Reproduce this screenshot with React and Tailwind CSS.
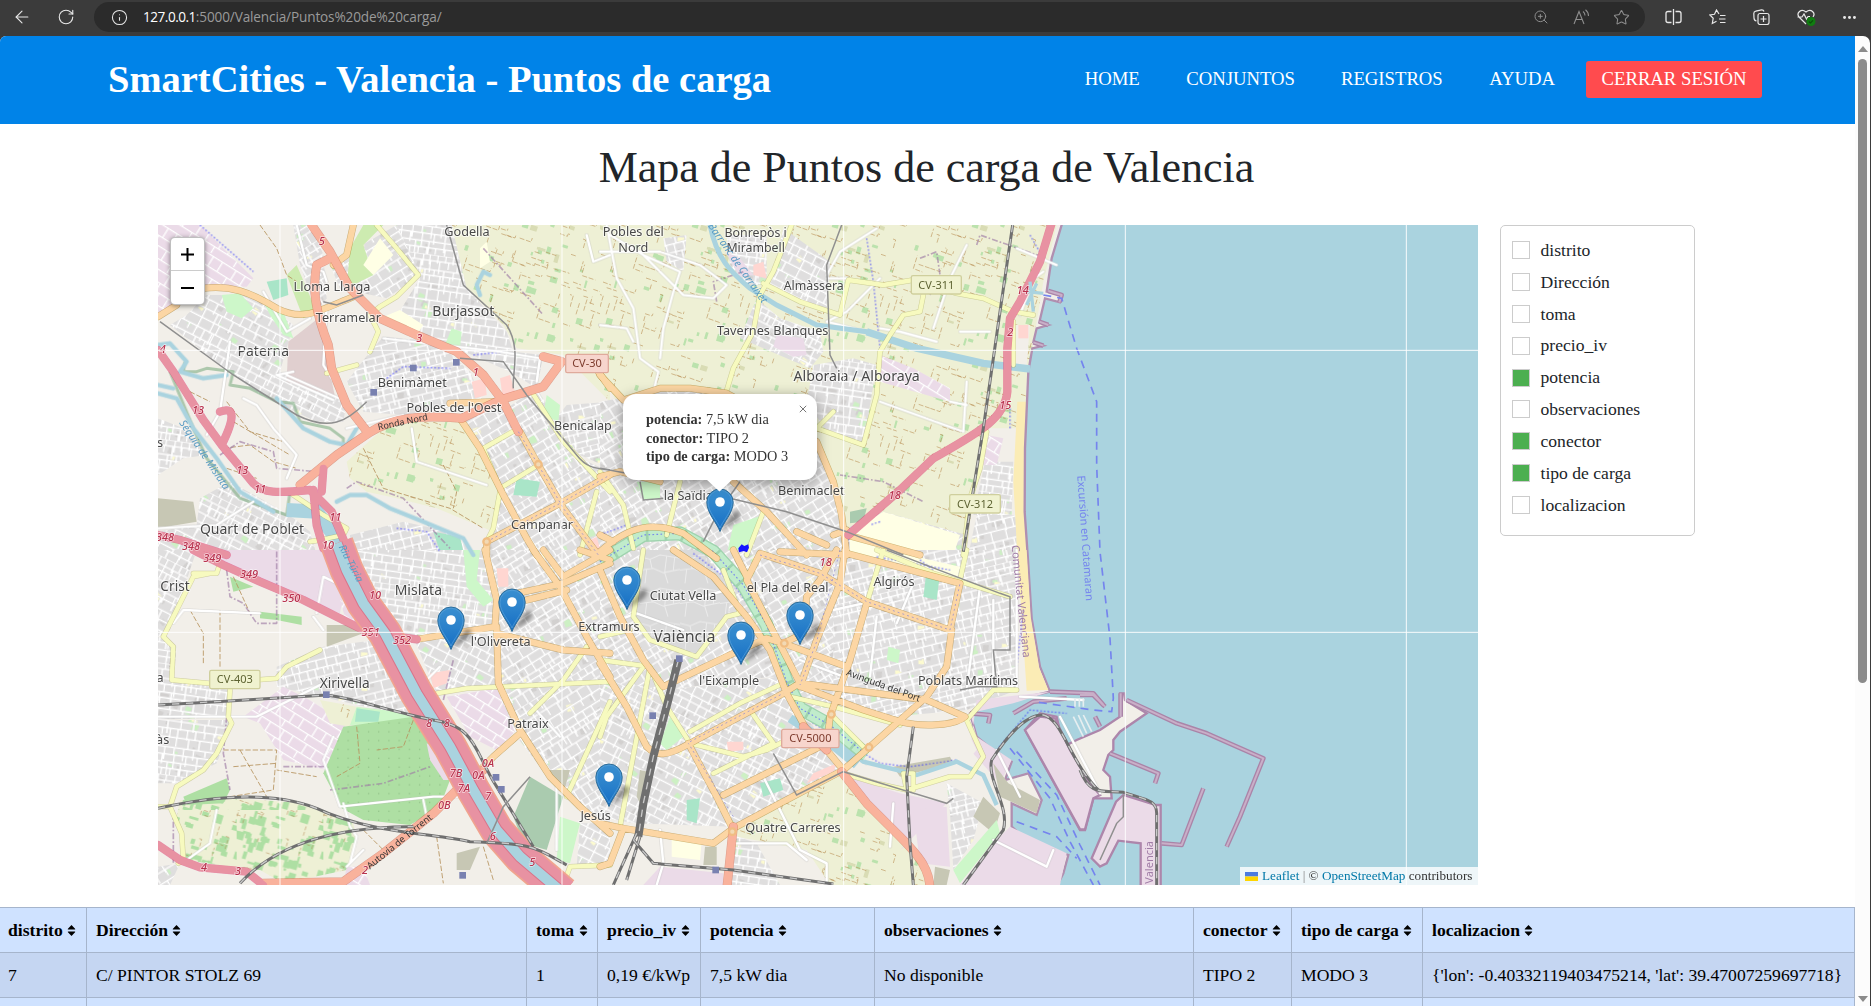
import React from 'react';
import { ArrowLeft, RotateCw, Info, ZoomIn, Star, Ellipsis } from 'lucide-react';

const ORIGIN = { A: [0, 0], B: [1350, 0], C: [0, 1005], D: [1350, 1005], E: [2790, 1005] };

const FILL = {
  farm: 'url(#farm)', city0: 'url(#city0)', city1: 'url(#city1)', city2: 'url(#city2)', city3: 'url(#city3)',
  orchard: 'url(#orchard)', forest: 'url(#forest)', land: '#f2efe9', ind: '#ebdbe8', indg: 'url(#indg)', water: '#aad3df', park: '#cdf7c9',
  green: '#aedfa3', dark: '#aacbaf', red: '#ffd6d1', hatch: '#e0cfcf', beach: '#fbecb5', olive: '#c7c7b4', pale: '#ffffe5', pitch: '#a9e5c8', grass: '#cdebb0', old: 'url(#old)',
};

const AREAS = [
  ['A', 'farm', 'M905 30H1380V560L1240 420L1100 400L1060 330L1000 270L940 210Z'],
  ['A', 'farm', 'M590 740L700 640L790 620L930 620L1000 710L1050 830L1030 950L860 880L740 850L650 830L600 790Z'],
  ['A', 'indg', 'M24 30H150L310 190L290 215L160 215L24 300Z'],
  ['A', 'city1', 'M110 300L170 240L330 240L430 330L390 470L590 560L580 620L500 620L330 540L210 450L60 330Z'],
  ['A', 'hatch', 'M415 380L505 310L555 545L410 500Z'],
  ['A', 'city2', 'M740 30H905L950 220L1070 350L1090 410L1180 420L1160 520L1080 470L920 400L730 320L810 190Z'],
  ['A', 'city0', 'M590 500L660 410L700 365L860 380L960 470L1000 560L760 600L640 590Z'],
  ['A', 'city3', 'M430 30H490L520 120L530 250L500 290L450 150Z'],
  ['A', 'city3', 'M540 150L620 100L740 30L810 180L710 250L570 220Z'],
  ['A', 'grass', 'M600 100L640 30H700L640 90L670 180L590 220Z'],
  ['A', 'grass', 'M410 180L440 150L500 290L460 310Z'],
  ['A', 'pitch', 'M350 200L410 190L415 240L370 255Z'],
  ['A', 'park', 'M215 240L270 235L310 280L275 310L230 290Z'],
  ['A', 'park', 'M330 240L400 290L430 370L400 360L360 300Z'],
  ['A', 'pale', 'M640 150L690 70L730 120L670 180Z'],
  ['A', 'pale', 'M690 310L750 285L820 330L800 360Z'],
  ['A', 'pale', 'M990 100L1010 80L1020 140L990 160Z'],
  ['A', 'city2', 'M24 610L100 640L170 720L100 730L24 780Z'],
  ['A', 'city1', 'M150 850L240 800L420 900L480 950L500 1020H24V950L140 930Z'],
  ['A', 'olive', 'M24 850L130 860L140 920L24 940Z'],
  ['A', 'city3', 'M940 600L1070 580L1160 520L1290 730L1380 770V1020H1010L1050 820L980 690Z'],
  ['A', 'city0', 'M1210 620L1250 570L1380 560V760L1290 720Z'],
  ['A', 'park', 'M1190 540L1230 570L1225 620L1180 600Z'],
  ['A', 'park', 'M905 340L935 350L930 400L885 390Z'],
  ['A', 'red', 'M1050 490L1080 480L1095 530L1060 560Z'],
  ['A', 'red', 'M965 500L1005 490L1010 540L975 550Z'],
  ['A', 'pitch', 'M1100 790L1170 800L1160 845L1090 840Z'],
  ['A', 'city0', 'M600 960L760 920L900 950L980 1020H600Z'],
  ['A', 'pitch', 'M850 950L930 965L940 1010L870 1010Z'],
  ['A', 'red', 'M1310 980L1340 965L1350 1000L1320 1015Z'],

  ['B', 'farm', 'M0 30H1370L1330 200L1280 500L1260 1020H900L750 960L650 680L370 530L180 520L50 560L0 470Z'],
  ['B', 'farm', 'M0 470V30H20V480Z'],
  ['B', 'city0', 'M190 70L260 60L250 170L200 140Z'],
  ['B', 'city2', 'M380 60L500 60L500 210L440 210L390 150Z'],
  ['B', 'city1', 'M550 40L690 140L680 290L510 210Z'],
  ['B', 'city1', 'M470 250L540 310L660 350L670 410L630 460L420 370Z'],
  ['B', 'ind', 'M530 360L610 370L620 420L580 425L520 395Z'],
  ['B', 'ind', 'M375 110L420 130L460 180L420 185Z'],
  ['B', 'red', 'M460 150L490 140L500 190L460 180Z'],
  ['B', 'city2', 'M640 450L760 430L830 450L790 690L680 650L620 560Z'],
  ['B', 'indg', 'M840 420L940 460L1050 520L1050 560L840 500Z'],
  ['B', 'city3', 'M0 560L60 550L200 520L370 530L650 660L740 940L850 890L1100 960V1020H0Z'],
  ['B', 'dark', 'M750 890L800 880L790 920L750 925Z'],
  ['B', 'pale', 'M750 950L850 890L1080 960L1060 1020H750Z'],
  ['B', 'land', 'M1165 640L1250 640L1252 900L1240 1020H1090Z'],
  ['B', 'city2', 'M1155 740L1240 740L1235 900H1120Z'],
  ['B', 'city0', 'M1130 900L1250 900V1020H1105Z'],
  ['B', 'indg', 'M1160 660L1210 670L1190 750L1150 750Z'],
  ['B', 'park', 'M110 800H180V850L130 855Z'],
  ['B', 'park', 'M400 930L490 900L440 1020H380Z'],
  ['B', 'beach', 'M1252 560L1278 560L1277 750L1285 1020H1252L1240 800Z'],
  ['B', 'land', 'M1245 330H1290L1280 450H1240Z'],
  ['B', 'red', 'M1255 330L1285 330V370H1255Z'],
  ['B', 'water', 'M1385 30L1355 130L1340 230L1385 240L1380 262L1335 250L1318 322L1345 330L1310 340L1300 382L1330 392L1297 400L1285 470L1275 700L1274 890L1283 1020L1295 1210L1320 1355L1350 1430L1240 1455L1150 1460L1110 1495L1130 1565L1185 1610L1235 1640L1215 1695L1285 1675L1325 1755L1310 1800L1235 1765L1235 1835L1290 1885L1405 1920L1390 1975L1370 2015H2640V24H1385Z'],

  ['C', 'city1', 'M24 0H140L60 240L24 260Z'],
  ['C', 'ind', 'M130 0L560 0L590 80L570 190L330 100Z'],
  ['C', 'indg', 'M570 150L660 220L590 220Z'],
  ['C', 'city0', 'M380 350L520 290L680 270L780 430L780 500L600 460L380 410Z'],
  ['C', 'olive', 'M530 225L600 225L640 250L530 290Z'],
  ['C', 'indg', 'M280 500L400 410L480 450L590 520L530 660L400 630L330 520Z'],
  ['C', 'city2', 'M24 260L80 290L70 390L180 410L240 420L240 500L24 510Z'],
  ['C', 'city2', 'M24 510H250L200 640L80 700L24 700Z'],
  ['C', 'farm', 'M510 450L620 470L600 530L540 520Z'],
  ['C', 'park', 'M620 470L780 490V520L600 525Z'],
  ['C', 'pitch', 'M620 475L690 485L685 515L615 515Z'],
  ['C', 'forest', 'M580 530L790 500L850 590L900 690L870 770L780 825L640 810L575 775L520 670Z'],
  ['C', 'orchard', 'M90 750L240 745L330 750L460 760L610 820L620 870L590 960L400 1000L330 960L300 960L110 930L80 800Z'],
  ['C', 'green', 'M100 740L230 685L240 720L220 760L110 765Z'],
  ['C', 'green', 'M240 80L310 110L250 125Z'],
  ['C', 'green', 'M330 185L455 200V225L380 210L330 205Z'],
  ['C', 'ind', 'M830 580L870 600L930 690L880 690L840 630Z'],
  ['C', 'city2', 'M610 0H1010L1040 240L790 260L740 240L650 90Z'],
  ['C', 'park', 'M940 0L990 0L980 90L1030 150L1000 170L950 110Z'],
  ['C', 'city1', 'M790 260L1030 250L1040 410L860 430Z'],
  ['C', 'red', 'M840 370L900 360L890 400L850 415Z'],
  ['C', 'indg', 'M890 440L1040 415L1100 540L1040 600L960 560Z'],
  ['C', 'city3', 'M1020 0H1380V840L1240 740L1100 560L1040 410Z'],
  ['C', 'red', 'M1040 55H1075V110H1045Z'],
  ['C', 'dark', 'M1140 680L1240 740L1190 900L1120 880L1090 800Z'],
  ['C', 'olive', 'M1190 660H1260L1240 730Z'],
  ['C', 'park', 'M1230 800L1290 820L1260 940L1220 930Z'],
  ['C', 'city1', 'M1290 820H1380V950H1280Z'],
  ['C', 'olive', 'M920 910L990 890L960 960L920 960Z'],
  ['C', 'city3', 'M24 950L90 940L60 1005H24Z'],
  ['C', 'indg', 'M590 950L640 950L660 1005H580Z'],

  ['D', 'city3', 'M0 0H730L740 200L720 470L580 480L520 380L200 420L0 400Z'],
  ['D', 'old', 'M120 0H300L390 110L385 200L290 310L150 270L100 190Z'],
  ['D', 'city0', 'M700 0H1250V420L1100 480L870 500L700 470Z'],
  ['D', 'city1', 'M0 390L200 420L540 380L620 500L730 660L400 830L100 820L0 800Z'],
  ['D', 'pale', 'M740 0H860L1080 50L1070 90L830 20L740 20Z'],
  ['D', 'pitch', 'M980 60L1020 70L1010 150L970 140Z'],
  ['D', 'park', 'M865 290L900 300L895 340L860 330Z'],
  ['D', 'red', 'M640 670L710 640L700 665L620 700Z'],
  ['D', 'red', 'M380 575H430V600L385 605Z'],
  ['D', 'park', 'M210 500L250 560L200 600L180 580Z'],
  ['D', 'pitch', 'M480 700L540 685L550 720L490 740Z'],
  ['D', 'pitch', 'M260 750L300 745L290 820L260 810Z'],
  ['D', 'beach', 'M1252 0H1280L1292 200L1318 355L1345 420L1280 422L1265 200Z'],
  ['D', 'ind', 'M1130 450L1350 425L1240 460L1110 490L1130 560L1235 630L1200 700L1110 600Z'],
  ['D', 'farm', 'M730 665L590 735L400 840L410 860L620 900L690 1005H990L930 880L800 740Z'],
  ['D', 'city2', 'M385 850L470 880L540 1005H385Z'],
  ['D', 'ind', 'M740 680L900 730L1040 760L1000 800L900 900L930 880Z'],
  ['D', 'land', 'M740 640L840 560L1090 520L1130 600L1060 680L900 700Z'],
  ['D', 'olive', 'M880 650L1050 620L1060 640L900 680Z'],
  ['D', 'city0', 'M1040 700L1150 760L1120 870L1060 960L1050 790Z'],
  ['D', 'olive', 'M1150 740L1200 790L1180 850L1120 800Z'],
  ['D', 'park', 'M1060 960L1190 810L1200 850L1080 1000Z'],
  ['D', 'olive', 'M1180 640L1225 700L1320 750L1310 790L1200 740Z'],
  ['D', 'ind', 'M1190 870L1230 830L1400 910L1380 1005H1080Z'],
  ['D', 'ind', 'M940 780L1040 770L1050 950L960 940Z'],
  ['D', 'pale', 'M215 860L305 875L300 930L215 920Z'],
  ['D', 'olive', 'M315 890H350V945H310Z'],
  ['D', 'ind', 'M180 950L370 970V1005H130Z'],
  ['D', 'olive', 'M120 660L145 665L120 760L110 740Z'],
  ['D', 'olive', 'M1005 950L1050 960L1040 1005H1000Z'],
];

const COAST = [
  ['D', 'land', 'M1275 540L1320 490L1370 500L1390 590L1430 570L1500 540L1560 500V430H1572L1575 450L1640 490L1560 545L1540 570L1540 600L1525 615L1510 660L1530 680L1535 745L1480 745L1455 840L1440 840Z'],
  ['D', 'ind', 'M1275 540L1320 500L1365 505L1410 600L1470 700L1500 735L1480 745L1455 838L1440 838Z'],
  ['E', 'ind', 'M130 735L228 765H242V1020H182V880L115 872L80 940L60 950L35 925L108 755Z'],
];

const KIND = {
  motor: ['#dc2a67', '#e892a2', 22], trunk: ['#c84e2f', '#f9b29c', 24], prim: ['#a06b00', '#fcd6a4', 18], sec: ['#a9a95a', '#f7fabf', 13],
  min: ['#bdbdbd', '#ffffff', 7], river: ['#aad3df', '#aad3df', 11],
};

const ROADS = [
  ['A', 'river', 'M24 390L60 385L110 440L90 470L160 490L230 480M24 535L80 550L130 640L200 730L270 830L370 890M24 510L70 520M380 550L460 640L540 680L590 690L620 640M560 860L600 840L650 840L720 880L820 920L940 970L970 1020M990 240L980 210L1000 170L1020 180'],
  ['A', 'min', 'M240 380L210 590L170 660M280 550L320 570L370 640L440 720L410 790M410 480L590 560M530 270L520 450L590 560M24 940L200 930L310 860M785 640L800 740L1010 810M340 230L410 350L480 310M700 370L1050 410L1170 430L1160 500M590 640L760 600M380 480L550 555M430 470L380 480M440 30L470 150L520 170L530 200M1380 120L1330 140L1310 60'],
  ['B', 'min', 'M20 30L50 190L100 280L120 430L175 470L160 530M30 60L130 120L240 170L220 230L190 340L180 430M0 110H180L300 150L380 210M830 40L720 110L680 180M680 190H740M840 190L740 290L680 320L800 350M1100 90L1050 190L1000 340M1080 350H1170M840 340L900 350L1010 380M840 560L1090 650L1100 500M1050 560L1100 570M130 120L250 240L340 250L380 210M0 330L80 340L100 380M1250 100L1370 150M1260 300L1300 190L1330 170'],
  ['C', 'min', 'M70 220L100 180L330 190M500 190L520 80L600 120M490 200L520 240M24 500H320L520 400M550 560L520 630L570 770L850 740L930 740M580 760L600 830L620 860L600 940M200 780L180 880L110 930M820 750L830 800M870 350L800 420M1230 560L1140 460M1220 700V900M640 900L590 950'],
  ['D', 'min', 'M0 230L110 190L250 240M700 180L790 160M490 680L600 900L680 940V1005M400 880H560L620 930M1180 870L1340 950L1360 900M880 760L870 890M740 580L800 640M890 220L940 100M810 380L830 200M180 840L190 940L170 1005M1250 0V420M1180 150V400M1140 110L1100 420M600 330L730 380M270 150L380 120L430 200L500 170M1260 440L1450 450M1380 500L1500 730M1190 600L1260 740'],
  ['A', 'sec', 'M680 30L740 100L805 180L740 245L690 275L660 300L685 350L660 410M530 475L620 450M430 840L520 900L590 940L580 960L510 975L480 980M1105 640L1000 700L1050 820L1165 750M1145 530L1240 680L1380 830M1050 830L1030 940L1010 980M1340 830L1290 1020'],
  ['B', 'sec', 'M575 30L520 170L480 240L460 350L400 460L370 560M490 205L600 260L720 300L745 195L850 210L940 195L1070 235L1150 250L1240 290L1300 300M970 240L960 290L910 300L870 360L840 410L830 540L790 690L650 640L700 590M0 770L70 870L100 1000M240 800L200 960M490 890L440 1020M1160 650L1140 760L1110 850L1090 1020M1240 320L1240 450'],
  ['C', 'sec', 'M130 70H200L210 40M180 70L130 80L40 260L70 290L65 390L180 400L380 385L410 350L510 300M240 420L235 500L245 520L200 610L160 660L80 710L60 770L95 850L100 930L85 940M24 770H60M860 430L950 415L1380 395M1140 490L1240 390L1310 290M1380 455L1250 740'],
  ['C', 'sec', 'M1240 1005L1260 950L1380 945'],
  ['D', 'sec', 'M130 0L100 200L150 270L290 320L380 200L420 190L370 60M0 260L90 240M0 330L150 350L200 470L270 580L430 620L500 600L600 550M150 350L60 830M0 560L20 500L130 350M270 545L420 460L550 400M450 480L520 580L340 670M570 440L700 470L900 525M700 500L800 600M850 0L800 160M1100 0L1080 90M730 670L830 700L920 720L1050 680H1110L1150 620L1100 510L1180 420H1250M830 0L1000 70L1230 140M920 720L910 670L940 670V720'],
  ['A', 'prim', 'M24 305L80 270M160 220C240 210 300 230 380 280C460 320 500 290 610 245M610 30L590 120L550 150M1110 650L1165 750L1240 880L1345 1020M930 610L990 700L1060 840L1130 970L1160 1020M900 565L1030 560M1010 980L1240 860L1380 780M1010 980V1020M1345 470L1380 520'],
  ['B', 'prim', 'M0 480L70 555L180 520L270 520L380 535L650 680L700 800L725 900L740 1020M0 1010C90 930 160 920 250 955L350 1030M0 960L40 980M0 785L60 770L180 800M400 800L500 890L620 1020M740 960L960 1020M700 960L740 945M540 1010L740 1020M590 950L680 990'],
  ['C', 'prim', 'M1005 0L1040 150L1035 230L800 268M1040 230L1045 400L1110 540L1200 680L1290 770L1380 850M1040 250L1240 300L1380 310M1150 0L1230 110L1310 260L1380 380M1100 130L1240 100L1380 40M1130 150L1250 120M1240 80L1380 0M1110 550L1030 620L970 680M1380 30L1290 0M1180 0L1240 80'],
  ['D', 'prim', 'M0 60L60 200L130 330L190 410L400 310L500 265L550 280L610 250L620 140L660 90L710 0M0 340L80 470L140 590C170 620 200 620 270 580L550 430L590 405L790 480L900 515C960 530 1060 530 1095 500L980 450L600 400L440 90L480 10L660 70L800 155L1050 240L1080 100L740 10M220 0L340 80L440 200L510 300L560 430L620 540L680 600L730 660M735 0L720 100L650 270L600 410M800 160L750 330L690 500L680 590M730 660L810 590L980 440L1040 350L1055 240M550 280L740 350M730 660L540 760L400 835L340 880L70 835L0 820M265 580L350 740L400 840M370 735L600 620L660 590M70 835L30 940L0 950M400 0L440 80'],
  ['A', 'trunk', 'M500 150C485 230 500 300 535 390L545 460L590 570L655 655M655 655C730 605 820 600 935 610L1050 555L1180 515L1235 440L1180 425M655 655L560 720L450 810M485 30L540 110L600 220L690 310L800 360L920 410L1000 480L1060 560L1105 650M500 150L540 130'],
  ['C', 'trunk', 'M1000 660L940 700L850 790L700 910L580 995L340 1000'],
  ['D', 'trunk', 'M400 830L380 1020M725 665L800 760L900 860C960 920 990 960 990 1020M610 530L680 600'],
  ['A', 'motor', 'M24 405L70 470L160 615L215 690L310 805C340 835 380 835 480 825L545 890L600 1020M490 825L500 930L520 1000M515 830L520 760M215 690C260 600 250 575 210 590M24 960L90 975L230 1020'],
  ['B', 'motor', 'M1355 24L1320 140L1260 260L1230 310L1222 400V530C1215 610 1140 650 1000 730L900 825L745 960'],
  ['C', 'motor', 'M130 0L220 45L330 95L460 150L560 200L660 250L800 268M24 885L90 930L150 952L290 965L340 1005'],
];

const RAILS = [
  ['A', 'thin', 'M30 320L250 480L440 600C540 650 590 620 650 560M890 30L940 210L1070 330C1115 400 1085 480 1090 520M930 430L1060 440L1130 540L1280 720C1310 760 1340 760 1380 765M520 260L560 270L640 240'],
  ['B', 'thin', 'M725 30L680 150L690 420L710 460M390 850L560 890L740 950L910 1020M0 760L80 775M120 800L130 855L190 850M420 800L350 900L310 980'],
  ['B', 'rail', 'M1238 30L1200 290L1150 640L1090 1010'],
  ['C', 'rail', 'M24 465L200 455L530 435C640 450 700 480 850 510C980 530 970 600 1040 710L1150 890M24 775C180 740 360 720 500 775C660 850 850 850 960 875C1150 880 1150 890 1250 945M270 1000C380 880 560 830 790 830'],
  ['C', 'thin', 'M1140 680L1060 770L1010 880'],
  ['D', 'wide', 'M235 330L205 450L160 620L130 760L115 860'],
  ['D', 'rail', 'M110 850L60 960L40 1005M120 860L80 990M100 870L160 940L400 960L700 1002M940 530L920 680L930 880L940 1005M1090 1005L1210 840C1230 770 1160 690 1175 630C1220 560 1280 490 1330 495C1390 510 1410 640 1500 725'],
  ['D', 'thin', 'M520 610L590 735L730 665L1040 760L1060 745M860 0L1200 130L1230 140V300H1180L1190 410H1130L1080 420'],
  ['E', 'rail', 'M0 660C30 740 70 720 130 727C200 750 230 750 230 790V1010'],
  ['E', 'thin', 'M130 735V800L110 820L60 930'],
];

const BREAKWATERS = [
  ['B', 'M1345 228L1385 240L1378 262M1318 320L1345 330M1300 382L1330 392'],
  ['D', 'M1350 425L1480 430L1510 465M1240 490L1300 455L1400 445M1110 490L1170 495L1165 520'],
  ['E', 'M122 430V500M140 450L290 520L380 550L550 625L480 800L440 890M90 610L235 670L225 700M370 715L305 885L245 880M0 435H40L75 470M45 500L60 530'],
];

const LABELS = [
  [951, 64, 38, 'Godella'], [546, 228, 38, 'Lloma Llarga'], [595, 321, 38, 'Terramelar'], [940, 302, 42, 'Burjassot'], [340, 423, 42, 'Paterna'],
  [787, 515, 38, 'Benimàmet'], [912, 592, 38, "Pobles de l'Oest"], [1299, 645, 38, 'Benicalap'], [1176, 943, 38, 'Campanar'], [306, 956, 42, 'Quart de Poblet'],
  [1450, 62, 38, 'Pobles del'], [1450, 111, 38, 'Nord'], [1817, 66, 37, 'Bonrepòs i'], [1817, 111, 37, 'Mirambell'], [1991, 226, 37, 'Almàssera'],
  [1868, 361, 38, 'Tavernes Blanques'], [2120, 498, 42.500, 'Alboraia / Alboraya'], [1984, 841, 38, 'Benimaclet'], [1615, 856, 38, 'la Saïdia'],
  [75, 1129, 41, 'Crist'], [30, 1401, 38, 'a'], [38, 1587, 38, 'às'], [30, 696, 38, 's'], [805, 1140, 42, 'Mislata'], [1052, 1294, 38, "l'Olivereta"], [584, 1418, 41, 'Xirivella'],
  [1134, 1539, 38, 'Patraix'], [1337, 1815, 38, 'Jesús'], [1377, 1247, 38, 'Extramurs'], [1599, 1154, 38, 'Ciutat Vella'], [1603, 1280, 48, 'València'],
  [1913, 1130, 38, 'el Pla del Real'], [2232, 1113, 38, 'Algirós'], [1737, 1409, 38, "l'Eixample"], [2454, 1409, 38, 'Poblats Marítims'], [1929, 1850, 38, 'Quatre Carreres'],
];
const NUMBERS = [
  [515, 90, '5'], [808, 380, '3'], [977, 482, '1'], [38, 415, '4'], [144, 596, '13'], [277, 777, '13'], [330, 834, '11'], [556, 918, '11'], [534, 1002, '10'], [45, 978, '348'], [123, 1005, '348'],
  [187, 1041, '349'], [297, 1090, '349'], [424, 1160, '350'], [662, 1262, '351'], [756, 1287, '352'], [675, 1152, '10'], [837, 1536, '8'], [890, 1536, '8'], [1014, 1657, '0A'], [985, 1691, '0A'], [918, 1687, '7B'], [942, 1731, '7A'],
  [883, 1783, '0B'], [1015, 1754, '7'], [1028, 1875, '6'], [1147, 1952, '5'], [645, 1976, '2'], [162, 1969, '4'], [264, 1980, '3'],
  [2618, 238, '14'], [2581, 362, '2'], [2566, 581, '15'], [2234, 853, '18'], [2027, 1054, '18'],
];
const SHIELDS = [
  [1247, 418, 128, 'CV-30', 'red'], [2284, 182, 150, 'CV-311', 'olive'], [2399, 839, 152, 'CV-312', 'olive'], [179, 1366, 151, 'CV-403', 'olive'], [1895, 1543, 172, 'CV-5000', 'red'],
];
const STATIONS = [[671, 532], [790, 459], [919, 442], [529, 1439], [1038, 1687], [1054, 1723], [938, 1981], [1588, 1331], [1508, 1502], [1697, 1965]];

function makeRandom(seed) {
  let s = seed;
  return () => {
    s = (s * 16807) % 2147483647;
    return s / 2147483647;
  };
}

function dashes(seed, count, size) {
  const r = makeRandom(seed);
  let d = '';
  for (let i = 0; i < count; i++) {
    const x = r() * size;
    const y = r() * size;
    const l = 14 + r() * 26;
    const flip = r() > 0.4;
    const dx = flip ? l : l * 0.3;
    const dy = flip ? l * 0.35 : -l;
    d += `M${x.toFixed(0)} ${y.toFixed(0)}l${dx.toFixed(0)} ${dy.toFixed(0)}`;
    if (r() > 0.55) d += `l${(dy * 0.35).toFixed(0)} ${(-dx * 0.35).toFixed(0)}`;
  }
  return d;
}

function plots(seed, count, size, max) {
  const r = makeRandom(seed);
  let d = '';
  for (let i = 0; i < count; i++) {
    const x = r() * size;
    const y = r() * size;
    const w = 6 + r() * max;
    const h = 6 + r() * max;
    d += `M${x.toFixed(0)} ${y.toFixed(0)}l${w.toFixed(0)} ${(w * 0.3).toFixed(0)}l${(-h * 0.3).toFixed(0)} ${h.toFixed(0)}l${(-w).toFixed(0)} ${(-w * 0.3).toFixed(0)}z`;
  }
  return d;
}

function streets(seed, size) {
  const r = makeRandom(seed);
  let d = '';
  for (let y = 0; y < size - 10; y += 17 + r() * 17) {
    d += `M0 ${y.toFixed(0)}H${size}`;
    const step = 20 + r() * 22;
    for (let x = r() * 20; x < size; x += step + r() * 8) d += `M${x.toFixed(0)} ${y.toFixed(0)}v${(18 + r() * 22).toFixed(0)}`;
  }
  return d;
}

const CITY = [[11, -14], [29, 27], [53, 8], [97, -32]];

function Patterns() {
  return (
    <defs>
      <pattern id="farm" width="420" height="420" patternUnits="userSpaceOnUse">
        <rect width="420" height="420" fill="#eef0d5" />
        <path d={plots(7, 34, 400, 17)} fill="#aedfa3" opacity=".8" />
        <path d={plots(31, 6, 400, 22)} fill="#d9dcb4" />
        <path d={dashes(5, 88, 420)} fill="none" stroke="#b5894c" strokeWidth="2.4" strokeDasharray="15 5" opacity=".7" />
      </pattern>
      <pattern id="orchard" width="260" height="260" patternUnits="userSpaceOnUse">
        <rect width="260" height="260" fill="#eef0d5" />
        <path d={plots(17, 90, 260, 22)} fill="#aedfa3" />
        <path d={dashes(8, 22, 260)} fill="none" stroke="#a8763a" strokeWidth="2" strokeDasharray="12 5" opacity=".7" />
      </pattern>
      <pattern id="forest" width="30.6" height="26.5" patternUnits="userSpaceOnUse">
        <rect width="31" height="27" fill="#aedfa3" />
        <rect x="12" y="14" width="2.5" height="2.5" fill="#6f9f68" />
      </pattern>
      <pattern id="indg" width="80" height="60" patternUnits="userSpaceOnUse" patternTransform="rotate(32)">
        <rect width="80" height="60" fill="#ebdbe8" />
        <path d="M0 5H80M0 38H80M20 5V38M55 38V65M68 5V38" stroke="#fff" strokeWidth="4" fill="none" />
      </pattern>
      <pattern id="old" width="120" height="100" patternUnits="userSpaceOnUse">
        <rect width="120" height="100" fill="#dadada" />
        <path d="M0 20L30 28L60 15L120 24M0 60L40 55L70 68L120 58M30 28L36 55M80 18L74 68L84 100M20 58L15 100M104 22L100 60" stroke="#ececec" strokeWidth="3" fill="none" />
      </pattern>
      {CITY.map(([seed, angle], i) => (
        <pattern key={seed} id={'city' + i} width="330" height="330" patternUnits="userSpaceOnUse" patternTransform={`rotate(${angle})`}>
          <rect width="330" height="330" fill="#dfdede" />
          <path d={plots(seed + 3, 24, 320, 17)} fill="#d2d0cf" />
          <path d={plots(seed + 6, 9, 320, 16)} fill="#cdf0c4" />
          <path d={plots(seed + 9, 6, 320, 14)} fill="#fdfbd0" />
          <path d={streets(seed, 330)} fill="none" stroke="#cfcece" strokeWidth="6.4" />
          <path d={streets(seed, 330)} fill="none" stroke="#fff" strokeWidth="5" />
        </pattern>
      ))}
      <linearGradient id="pin" x1="0" y1="0" x2="0" y2="1">
        <stop offset="0" stopColor="#3a8fd0" />
        <stop offset=".5" stopColor="#2a81cb" />
        <stop offset="1" stopColor="#146dc4" />
      </linearGradient>
    </defs>
  );
}

const at = (k) => `translate(${ORIGIN[k][0]} ${ORIGIN[k][1]})`;

function Shapes({ items, outline }) {
  return items.map(([k, f, d], i) => (
    <path key={i} transform={at(k)} d={d} fill={FILL[f]} stroke={outline ? '#ad86ab' : f === 'water' ? '#b08fb0' : 'none'} strokeWidth={7} />
  ));
}

function Roads({ kinds }) {
  const list = ROADS.filter((r) => kinds.includes(r[1]));
  return (
    <g fill="none" strokeLinejoin="round" strokeLinecap="round">
      {list.map(([k, t, d], i) => (
        <path key={'c' + i} transform={at(k)} d={d} stroke={KIND[t][0]} strokeOpacity=".5" strokeWidth={KIND[t][2] + 3} />
      ))}
      {list.map(([k, t, d], i) => (
        <path key={'f' + i} transform={at(k)} d={d} stroke={KIND[t][1]} strokeWidth={KIND[t][2]} />
      ))}
    </g>
  );
}

function MapDrawing() {
  const turia = 'M560 -20L590 60L640 160L705 250L800 430L900 590L970 720L1040 840L1110 920L1240 1030';
  const garden = 'M1350 1040L1480 960L1590 955L1690 1010L1780 1110L1850 1230L1910 1400L1950 1480L2040 1530L2150 1620';
  return (
    <svg className="block h-full w-full" viewBox="24 30 3960 1980" preserveAspectRatio="none" fontFamily="'Noto Sans', sans-serif">
      <Patterns />
      <rect x="24" y="30" width="3960" height="1980" fill="#f2efe9" />
      <Shapes items={AREAS} />
      <Shapes items={COAST} outline />
      <g fill="none" strokeLinejoin="round">
        {BREAKWATERS.map(([k, d], i) => <path key={i} transform={at(k)} d={d} stroke="#aa84a8" strokeWidth="14" />)}
        {BREAKWATERS.map(([k, d], i) => <path key={i + 'i'} transform={at(k)} d={d} stroke="#c9afc8" strokeWidth="6" />)}
        <g stroke="#b79460" strokeWidth="2.6" strokeDasharray="16 6">
          <path d="M220 700L300 690L370 740L440 760M230 760L320 790M100 520L180 560M250 620L420 720M230 560L300 650L400 680M330 30L380 100L410 180L440 200M640 700L700 820L900 880L1000 940M880 750L920 830L910 880" />
          <path transform="translate(0 1005)" d="M120 180L160 250V340M210 180V350M250 80L300 190M220 600H380L370 720L240 740M250 650L380 640M270 600L350 740M380 660L500 680M640 840L700 900L780 850M860 860L880 1000M1000 890L1030 990M620 530L630 640L560 680M790 510L760 590L680 600" />
        </g>
        <g stroke="#9f7da6" strokeWidth="5" strokeDasharray="18 6 5 6" opacity=".65">
          <path d="M210 720L270 680L370 710L380 760L500 770M590 820L620 800L760 850L900 1000M1000 100L1180 300M1700 260L1690 200L1780 170M2310 130L2360 110L2370 180L2340 240M2480 90L2490 60L2690 130M2070 780L2200 800L2320 860" />
          <path transform="translate(0 1005)" d="M230 60L240 140L280 160L320 220L380 220V0M70 290L60 350M230 500L220 610L240 720M540 720L700 700L840 650M880 450L910 330M70 780V940M400 650L530 650" />
        </g>
        <path d="M105 440L100 470H140L170 460L250 470L240 510L300 520L380 560L430 565L450 620L540 640L580 670V700M60 470L130 640L170 730L270 850L410 900L420 830" stroke="#7fae83" strokeWidth="9" opacity=".6" />
        <g stroke="#3a3aff" strokeWidth="3.5" strokeDasharray="5 6" opacity=".75">
          <path d="M150 30L310 170M710 490L760 455L900 460M970 420L1060 410M2150 70L2170 200L2190 400M2640 60L2680 130M740 940L830 950L870 1010M2100 960L2080 1020M2580 580V640M2190 920L2160 930M1350 960L1430 930" />
          <path transform="translate(1350 1005)" d="M280 10L400 100L490 230L540 400L640 520L760 590L840 640L930 650L1070 630M830 20L1050 60M960 30L1000 60M1270 180L1250 350M1190 600L1290 480L1400 490M180 850L340 875" />
        </g>
      </g>
      <Roads kinds={['river', 'min']} />
      <g fill="none" stroke="#aad3df">
        <path d="M1680 30C1700 130 1740 170 1800 220L1880 270L2000 330L2150 350L2300 400L2500 445L2640 462" strokeWidth="15" />
        <path d="M2150 350L2300 400L2500 445L2640 462" strokeWidth="22" />
        <path d="M410 885L500 890L580 1000" strokeWidth="42" />
        <path d="M2030 1560L2140 1640L2300 1680L2420 1640L2500 1680L2540 1770" strokeWidth="13" />
        <path d="M1920 1510L2060 1600L2120 1650" strokeWidth="26" />
      </g>
      <path d={garden} fill="none" stroke="#9fd3ae" strokeWidth="42" strokeLinejoin="round" />
      <path d={garden} fill="none" stroke="#c0eccb" strokeWidth="34" strokeLinejoin="round" strokeDasharray="48 8" />
      <path d={garden} fill="none" stroke="#4a4aff" strokeWidth="3.5" strokeDasharray="5 7" opacity=".6" />
      <Roads kinds={['sec']} />
      <Roads kinds={['prim']} />
      <Roads kinds={['trunk', 'motor']} />
      <g transform="translate(0 1005)" fill="none" strokeLinejoin="round">
        <path d={turia} stroke="#f0a48f" strokeWidth="102" />
        <path d={turia} stroke="#e892a2" strokeWidth="92" />
        <path d={turia} stroke="#d9748a" strokeWidth="36" />
        <path d={turia} stroke="#aad3df" strokeWidth="30" />
      </g>
      <g fill="none">
        {RAILS.map(([k, t, d], i) => (
          <g key={i} transform={at(k)}>
            <path d={d} stroke={t === 'thin' ? '#8f8f8f' : '#6f6f6f'} strokeWidth={t === 'wide' ? 24 : t === 'rail' ? 9 : 4.5} />
            {t !== 'thin' && <path d={d} stroke="#c9c9c9" strokeWidth="4" strokeDasharray="22 20" />}
          </g>
        ))}
        <g stroke="#8a86d8" strokeWidth="2.6" strokeDasharray="6 9" opacity=".8">
          <path d="M1105 650L1165 750L1240 880L1345 1020M1010 980L1240 860L1380 780M2070 1005L2000 1280L1950 1410M1620 1580L1900 1435M1830 1020L2010 1075L2150 1160L2400 1245L2430 1105M1750 1805L1615 1585" />
        </g>
        <g stroke="#7584ee" strokeWidth="5" strokeDasharray="24 18">
          <path d="M2680 240L2735 250L2780 400L2840 560V750L2850 1010L2880 1270L2890 1450L2885 1490L2830 1485L2650 1460" />
          <path d="M2580 1600L2700 1750L2760 1880L2830 2010M2600 1610L2720 1740L2790 1890L2850 2010M2600 1820L2720 1865L2780 1930" />
        </g>
        <path d="M2775 1450V1475M2788 1450V1475M2800 1450V1475M2770 1505L2800 1565M2785 1500L2810 1555M2800 1500L2825 1550" stroke="#e6eef0" strokeWidth="5" />
        <path d="M2630 230L2680 235M2640 200L2650 290M2660 205L2630 270" stroke="#aad3df" strokeWidth="10" />
      </g>
      <path d="M1765 1000l10 -12l8 5l12 -5l2 10l-6 14l-10 -4l-14 4z" fill="#1313ff" />
      {[[2044, 1498], [2157, 1597], [1010, 980], [1165, 748], [1903, 1285], [1747, 1850]].map(([x, y]) => (
        <circle key={x} cx={x} cy={y} r="10" fill="#f2d9b4" stroke="#f0bd83" strokeWidth="7" />
      ))}
      {STATIONS.map(([x, y]) => <rect key={x} x={x - 10} y={y - 10} width="20" height="20" fill="#7981b0" />)}
      {SHIELDS.map(([x, y, w, t, c]) => (
        <g key={t}>
          <rect x={x} y={y} width={w} height="55" rx="5" fill={c === 'red' ? '#f7d5cd' : '#f0f2d0'} stroke={c === 'red' ? '#dfaa9c' : '#cfcf9d'} strokeWidth="4" />
          <text x={x + w / 2} y={y + 39} fontSize="33" textAnchor="middle" fill={c === 'red' ? '#7d3b2d' : '#5d6332'}>{t}</text>
        </g>
      ))}
      <g fontSize="33" fontStyle="italic" fontWeight="500" fill="#b8324e" stroke="#fff" strokeOpacity=".65" strokeWidth="4" paintOrder="stroke" textAnchor="middle">
        {NUMBERS.map(([x, y, t], i) => <text key={i} x={x} y={y}>{t}</text>)}
      </g>
      <g fill="#484848" stroke="#fff" strokeOpacity=".65" strokeWidth="6" strokeLinejoin="round" paintOrder="stroke" textAnchor="middle">
        {LABELS.map(([x, y, s, t]) => <text key={t} x={x} y={y} fontSize={s}>{t}</text>)}
      </g>
      <g fontSize="27" fill="#333" textAnchor="middle">
        <text transform="translate(760 630) rotate(-12)">Ronda Nord</text>
        <text transform="translate(2197 1420) rotate(20)" fontSize="28">Avinguda del Port</text>
        <text transform="translate(754 1887) rotate(-39)" fontSize="28">Autovia de Torrent</text>
      </g>
      <g fontSize="31" textAnchor="middle" fill="#5a9cc4" fontStyle="italic">
        <text transform="translate(155 725) rotate(56)">Séquia de Mislata</text>
        <text transform="translate(1755 150) rotate(55)" fontSize="31">Barranc de Carraixet</text>
        <text transform="translate(594 1050) rotate(62)">Riu Túria</text>
      </g>
      <g fontSize="33" textAnchor="middle">
        <text transform="translate(2795 970) rotate(86)" fill="#7584ee">Excursión en Catamaran</text>
        <text transform="translate(2602 1160) rotate(84)" fill="#a07ca6">Comunitat Valenciana</text>
        <text transform="translate(3010 1942) rotate(-90)" fill="#a07ca6">Valencia</text>
      </g>
      <path d="M390 30V2010M1236 30V2010M2081 30V2010M2926 30V2010M3769 30V2010M24 406H3984M24 1252H3984" stroke="#fff" strokeWidth="3" strokeOpacity=".9" />
    </svg>
  );
}

const PINS = [
  'left-[279px] top-[381px]', 'left-[340px] top-[363px]', 'left-[455px] top-[341px]', 'left-[569px] top-[396px]', 'left-[628px] top-[376px]', 'left-[437px] top-[538px]', 'left-[547.500px] top-[263px]',
];

function Pin({ place }) {
  return (
    <svg className={'absolute h-[45px] w-[50px] overflow-visible ' + place} viewBox="0 0 50 45">
      <path d="M14 43L28 24C35 20 37 28 29 34Z" fill="#000" opacity=".4" style={{ filter: 'blur(2px)' }} />
      <path d="M14 43.500C11 35 .8 25 .8 14.200A13.200 13.200 0 0 1 27.200 14.200C27.200 25 17 35 14 43.500Z" fill="url(#pin)" stroke="#2e6c97" strokeWidth="1" />
      <path d="M14 40C11.500 33 2 24 2 14.200A12 12 0 0 1 26 14.200C26 24 16.500 33 14 40Z" fill="none" stroke="#5ea5dc" strokeWidth="1" opacity=".6" />
      <circle cx="14" cy="14" r="4.8" fill="#fff" />
    </svg>
  );
}

function LeafletMap() {
  return (
    <div className="relative h-[660px] w-[1320px] shrink-0 overflow-hidden">
      <MapDrawing />
      {PINS.map((p) => <Pin key={p} place={p} />)}
      <div className="absolute top-[12px] left-[12px] flex w-[35px] flex-col overflow-hidden rounded-[5px] border border-black/25 bg-white shadow-[0_1px_5px_rgba(0,0,0,0.45)]">
        <button className="flex h-[33px] items-center justify-center border-b border-[#ccc]">
          <svg width="13" height="13" viewBox="0 0 13 13"><path d="M6.500 0V13M0 6.500H13" stroke="#000" strokeWidth="2" /></svg>
        </button>
        <button className="flex h-[33px] items-center justify-center">
          <svg width="13" height="13" viewBox="0 0 13 13"><path d="M0 7H13" stroke="#000" strokeWidth="2" /></svg>
        </button>
      </div>
      <div className="absolute top-[169px] left-[465px] h-[86px] w-[194px] rounded-[13px] bg-white shadow-[0_3px_14px_rgba(0,0,0,0.4)]">
        <div className="pt-[16px] pl-[23px] text-[14.3px] leading-[18.6px] text-[#333]">
          <p><b>potencia:</b> 7,5 kW dia</p>
          <p><b>conector:</b> TIPO 2</p>
          <p><b>tipo de carga:</b> MODO 3</p>
        </div>
        <svg className="absolute top-[11px] right-[10px]" width="8" height="8" viewBox="0 0 8 8"><path d="M.8.8L7.200 7.200M7.200.8L.8 7.200" stroke="#757575" strokeWidth="1" /></svg>
        <svg className="absolute top-[85px] left-[83px]" width="27" height="13" viewBox="0 0 27 13"><path d="M0 0H27L13.500 12.500Z" fill="#fff" /></svg>
      </div>
      <div className="absolute right-0 bottom-0 flex h-[18px] w-[238px] items-center bg-white/80 pl-[5px] text-[13.2px] leading-[18px] text-[#333]">
        <svg className="mr-[4px]" width="13" height="9" viewBox="0 0 13 9"><path fill="#4c7be1" d="M0 0H13V4.500H0Z" /><path fill="#ffd500" d="M0 4.500H13V9H0Z" /></svg>
        <span className="whitespace-pre"><span className="text-[#0078a8]">Leaflet</span> <span className="text-[#888]">|</span> © <span className="text-[#0078a8]">OpenStreetMap</span> contributors</span>
      </div>
    </div>
  );
}

function BrowserBar() {
  return (
    <div className="flex h-[36px] items-start bg-[#3b3b3b] text-[#e8e8e8]">
      <div className="flex h-[34px] w-[94px] items-center">
        <ArrowLeft className="ml-[12px] h-[20px] w-[20px]" strokeWidth={1.3} />
        <RotateCw className="ml-[25px] h-[18px] w-[18px]" strokeWidth={1.5} />
      </div>
      <div className="mt-[2px] flex h-[30px] w-[1551px] items-center rounded-full bg-[#2b2b2b] pl-[17px]">
        <Info className="h-[17px] w-[17px]" strokeWidth={1.5} />
        <span className="ml-[15px] font-['Open_Sans',sans-serif] text-[13.6px] tracking-[-0.14px] text-[#9a9a9a]"><span className="tracking-[-0.5px] text-white">127.0.0.1</span>:5000/Valencia/Puntos%20de%20carga/</span>
        <div className="ml-auto flex items-center gap-[23.5px] pr-[15px] text-[#8e8e8e]">
          <ZoomIn className="h-[16px] w-[16px]" strokeWidth={1.5} />
          <svg width="17" height="16" viewBox="0 0 17 16" fill="none" stroke="currentColor" strokeWidth="1.1"><path d="M1 15L6 2.500L11 15M2.800 10.500H9.200M10 2.500Q12 4 12 6.500M12.500 .8Q15.500 3.200 15.500 7" /></svg>
          <Star className="h-[17px] w-[17px]" strokeWidth={1.5} />
        </div>
      </div>
      <div className="ml-[20px] flex h-[34px] items-center gap-[27px]">
        <svg width="17" height="16" viewBox="0 0 17 16" fill="none" stroke="currentColor" strokeWidth="1.3"><path d="M6.500 2.500H3Q1 2.500 1 4.500V11.500Q1 13.500 3 13.500H6.500M10.500 2.500H14Q16 2.500 16 4.500V11.500Q16 13.500 14 13.500H10.500M8.500 0V16" /></svg>
        <svg width="17" height="16" viewBox="0 0 17 16" fill="none" stroke="currentColor" strokeWidth="1.2"><path d="M10 5L7.500 1L5.500 5.300L.8 6L4.200 9.300L3.300 14.500L7.500 12.200M11 6.500H16.500M10 10H16.500M11 13.500H16.500" /></svg>
        <svg width="17" height="16" viewBox="0 0 17 16" fill="none" stroke="currentColor" strokeWidth="1.2"><path d="M3.500 12Q1 11.500 1 9L.8 4.500Q.8 2.500 2.800 2.200L8.500 .8Q10.500 .6 11 2.500" /><rect x="5" y="4.500" width="11" height="11" rx="2" /><path d="M10.500 7V13M7.500 10H13.500" /></svg>
        <svg width="19" height="17" viewBox="0 0 19 17" fill="none" stroke="currentColor" strokeWidth="1.2"><path d="M9 15L2 8C-1 4 4-1 9 3C14-1 19 4 16 8M.5 8H5L7 5L9.500 10L11 7.500H13" /><circle cx="14" cy="12.500" r="4.500" fill="#107c10" stroke="none" /><path d="M12 12.600L13.500 14L16 11.300" stroke="#0a4d0a" /></svg>
        <Ellipsis className="-ml-[2px] h-[17px] w-[17px]" strokeWidth={2.2} />
      </div>
    </div>
  );
}

function Header() {
  return (
    <header className="flex h-[88px] items-center justify-between bg-[#0083e8] pr-[93px] pl-[108px] text-white">
      <h1 className="text-[38.5px] font-bold whitespace-nowrap">SmartCities - Valencia - Puntos de carga</h1>
      <nav className="mb-[1px] flex items-center text-[18.7px] whitespace-nowrap">
        <a className="mr-[46.5px]">HOME</a>
        <a className="mr-[46px]">CONJUNTOS</a>
        <a className="mr-[46.5px]">REGISTROS</a>
        <a className="mr-[31px]">AYUDA</a>
        <a className="flex h-[37px] w-[176px] items-center justify-center rounded-[3px] bg-[#ff4b4e]">CERRAR SESIÓN</a>
      </nav>
    </header>
  );
}

const FIELDS = [['distrito'], ['Dirección'], ['toma'], ['precio_iv'], ['potencia', true], ['observaciones'], ['conector', true], ['tipo de carga', true], ['localizacion']];

function Filters() {
  return (
    <div className="flex h-[311px] w-[195px] flex-col rounded-[5px] border border-[#ccc] pt-[8px] pl-[11px] text-[17.6px] text-[#212529]">
      {FIELDS.map(([name, on]) => (
        <label key={name} className="flex h-[31.9px] items-center">
          <span className={'mr-[10.5px] h-[18px] w-[18px] border border-[#ccc] ' + (on ? 'bg-[#4caf50]' : 'bg-white')} />
          {name}
        </label>
      ))}
    </div>
  );
}

const HEAD = ['distrito', 'Dirección', 'toma', 'precio_iv', 'potencia', 'observaciones', 'conector', 'tipo de carga', 'localizacion'];
const ROW = ['7', 'C/ PINTOR STOLZ 69', '1', '0,19 €/kWp', '7,5 kW dia', 'No disponible', 'TIPO 2', 'MODO 3', "{'lon': -0.40332119403475214, 'lat': 39.47007259697718}"];
const COLS = 'grid grid-cols-[87px_440px_71px_103px_174px_319px_98px_131px_432px] border-[#a6b5cc] text-[17.6px] text-black whitespace-nowrap ';
const CELL = 'flex items-center border-r border-[#a6b5cc] pl-[9px] first:pl-[8px]';

function Table() {
  return (
    <div className="mt-[22px]">
      <div className={COLS + 'h-[46px] border-y bg-[#cfe2ff] font-bold'}>
        {HEAD.map((h) => (
          <div key={h} className={CELL}>
            {h}
            <svg className="mt-[1px] ml-[4.500px] shrink-0" width="9" height="11" viewBox="0 0 9 12"><path d="M1 5Q0 5 .6 4L4.500 0L8.400 4Q9 5 8 5ZM1 7Q0 7 .6 8L4.500 12L8.400 8Q9 7 8 7Z" /></svg>
          </div>
        ))}
      </div>
      <div className={COLS + 'h-[45px] border-b bg-[#c5d6f2]'}>
        {ROW.map((c, i) => <div key={i} className={CELL}>{c}</div>)}
      </div>
      <div className={COLS + 'h-[45px] bg-[#cfe2ff]'}>
        {HEAD.map((h) => <div key={h} className={CELL} />)}
      </div>
    </div>
  );
}

function Scrollbar() {
  return (
    <div className="flex w-[16px] shrink-0 bg-[#3b3b3b]">
      <div className="flex w-[15px] flex-col items-center rounded-tr-[7px] bg-[#fcfcfc]">
        <svg className="mt-[10px]" width="10" height="6" viewBox="0 0 10 6"><path d="M5 0L10 6H0Z" fill="#8b8b8b" /></svg>
        <div className="mt-[7px] h-[624px] w-[9px] rounded-full bg-[#8b8b8b]" />
        <svg className="mt-auto mb-[4px]" width="10" height="6" viewBox="0 0 10 6"><path d="M0 0H10L5 6Z" fill="#8b8b8b" /></svg>
      </div>
    </div>
  );
}

export default function App() {
  return (
    <div className="flex h-[1006px] w-[1871px] flex-col overflow-hidden bg-white font-['Liberation_Serif',serif]">
      <BrowserBar />
      <div className="flex min-h-0 flex-1 bg-[#3b3b3b]">
        <main className="min-w-0 flex-1 overflow-hidden rounded-tl-[6px] bg-white">
          <Header />
          <h2 className="mt-[11px] flex h-[66px] items-center justify-center pr-[2px] text-[44px] leading-none text-[#212529]">Mapa de Puntos de carga de Valencia</h2>
          <div className="mt-[24px] flex items-start gap-[22px] pl-[158px]">
            <LeafletMap />
            <Filters />
          </div>
          <Table />
        </main>
        <Scrollbar />
      </div>
    </div>
  );
}
